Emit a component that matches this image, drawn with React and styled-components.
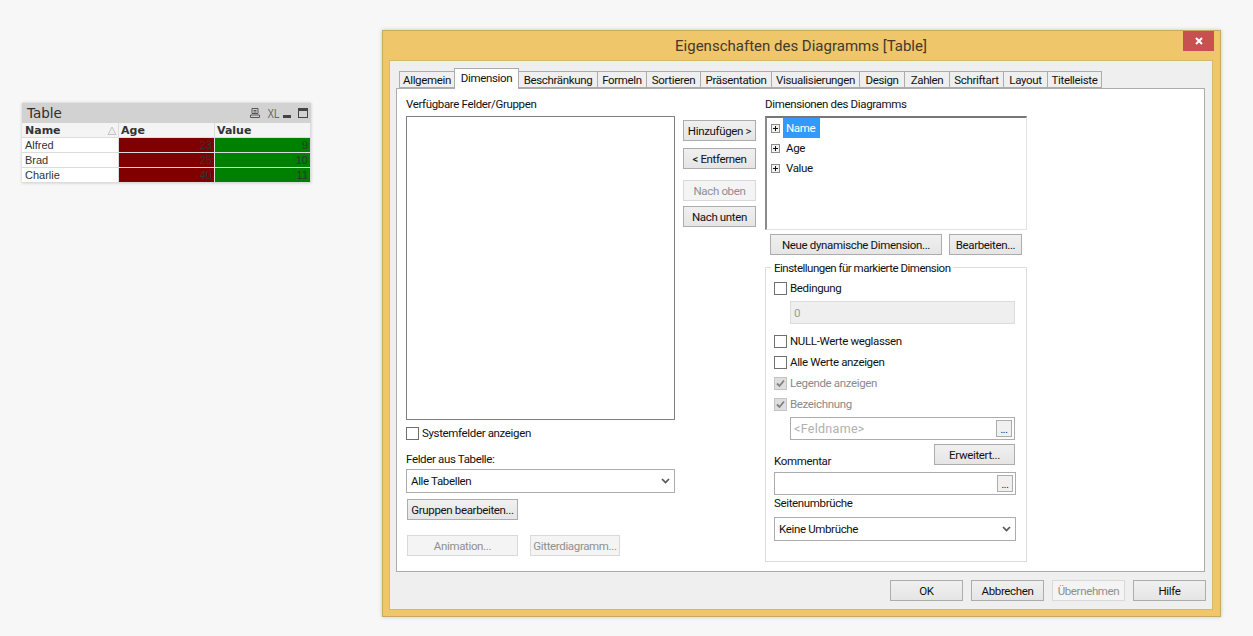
import React from "react";
import styled, { createGlobalStyle } from "styled-components";

const Global = createGlobalStyle`
  html, body { margin: 0; padding: 0; background: #f7f7f7; }
  #root { width: 1253px; height: 636px; overflow: hidden; }
`;

const Page = styled.div`
  display: flex; align-items: flex-start; gap: 71px; padding-left: 22px;
  font-family: "Roboto", sans-serif; font-size: 11.5px; color: #111; letter-spacing: -.35px;
`;

/* ---- table widget ---- */
const Widget = styled.div`
  width: 289px; margin-top: 103px; background: #fff; flex: none; letter-spacing: 0;
  box-shadow: 0 0 3px rgba(0,0,0,.2);
  font-family: "DejaVu Sans", sans-serif;
`;
const WTitle = styled.div`
  height: 20px; background: #d2d2d2; display: flex; align-items: center; padding: 0 2px 0 5px;
  color: #2e2e2e; font-size: 13.5px; justify-content: space-between;
`;
const WIcons = styled.div`
  display: flex; align-items: center; gap: 5px; color: #666; font-size: 11px;
  font-family: "Liberation Sans", sans-serif;
`;
const XL = styled.span`transform: scaleX(.75); width: 11px; display: inline-block; font-size: 13px; text-align: center;`;
const WRow = styled.div`
  display: grid; grid-template-columns: 97px 96px 96px; height: 15px; box-sizing: border-box;
  border-bottom: 1px solid #dcdcdc;
`;
const WHead = styled.div`
  background: #f4f4f4; font-weight: 700; font-size: 11px; color: #333; padding-left: 2px; line-height: 15px;
  border-right: 1px solid #dcdcdc; position: relative; box-sizing: border-box; overflow: hidden;
  &:first-child { padding-left: 3px; }
`;
const SortMark = styled.svg`position: absolute; right: 1px; top: 3px;`;
const WCell = styled.div`
  line-height: 14px; padding: 0 2px; box-sizing: border-box; overflow: hidden;
  border-right: 1px solid #dcdcdc;
  background: ${p => p.$bg || "#fff"}; color: #333;
  text-align: ${p => p.$bg ? "right" : "left"};
  font-family: "Liberation Sans", sans-serif; font-size: 11px;
  &:first-child { padding-left: 3px; }
`;

/* ---- dialog ---- */
const Dialog = styled.div`
  width: 839px; height: 587px; margin-top: 30px; box-sizing: border-box; flex: none;
  background: #efc669; border: 1px solid #c9a860; box-shadow: 0 0 4px rgba(0,0,0,.2);
  display: flex; flex-direction: column; padding: 0 7px 6px 6px;
`;
const TitleBar = styled.div`
  height: 29px; flex: none; display: flex; align-items: center; justify-content: center; position: relative;
  font-size: 15px; color: #43392a; letter-spacing: 0;
`;
const Close = styled.div`
  position: absolute; right: -1px; top: 0; width: 31px; height: 20px; background: #c75050;
  display: flex; align-items: center; justify-content: center;
`;
const Inner = styled.div`
  flex: 1; background: #efefef; border: 1px solid #d6b76c; padding: 7px 7px 0 6px; display: flex; flex-direction: column;
  box-sizing: border-box; min-height: 0;
`;
const Tabs = styled.div`display: flex; height: 20px; padding-left: 3px; align-items: flex-end; position: relative; z-index: 1;`;
const Tab = styled.div`
  width: ${p => p.$w}px; box-sizing: border-box; text-align: center; flex: none; white-space: nowrap;
  height: ${p => p.$active ? 21 : 17}px; margin-bottom: ${p => p.$active ? -1 : 0}px;
  border: 1px solid #acacac; border-bottom: ${p => p.$active ? "none" : "1px solid #acacac"};
  margin-left: -1px; background: ${p => p.$active ? "#fff" : "#efefef"}; position: relative;
  line-height: ${p => p.$active ? 18 : 16}px; z-index: ${p => p.$active ? 2 : 0};
  &:first-child { margin-left: 0; }
`;
const TabPanel = styled.div`
  height: 484px; box-sizing: border-box; background: #fff; border: 1px solid #acacac;
  display: flex; gap: 8px; padding: 9px 0 0 9px;
`;
const Col = styled.div`display: flex; flex-direction: column; width: ${p => p.$w}px; flex: none; padding-top: ${p => p.$pt || 0}px; margin-left: ${p => p.$ml || 0}px;`;
const Label = styled.div`height: 14px; line-height: 14px; margin-top: ${p => p.$mt || 0}px; margin-bottom: ${p => p.$mb || 0}px; white-space: nowrap;`;
const ColLabel = styled.div`height: 18px; line-height: 12px; white-space: nowrap;`;
const ListBox = styled.div`height: 304px; box-sizing: border-box; border: 1px solid #7e7e86; background: #fff;`;
const CheckRow = styled.div`
  display: flex; align-items: center; gap: 3px; height: 13px; margin-top: ${p => p.$mt || 0}px; white-space: nowrap;
  color: ${p => p.$disabled ? "#8a8a8a" : "#111"};
`;
const CheckText = styled.span`padding-bottom: 2px;`;
const Box = styled.span`
  width: 13px; height: 13px; box-sizing: border-box; flex: none; display: flex; align-items: center; justify-content: center;
  border: 1px solid ${p => p.$disabled ? "#c4c4c4" : "#707070"}; background: ${p => p.$disabled ? "#dedede" : "#fff"};
`;
const Select = styled.div`
  height: 24px; box-sizing: border-box; border: 1px solid #acacac; background: #fff; margin-top: ${p => p.$mt || 0}px; margin-right: ${p => p.$mr || 0}px;
  display: flex; align-items: center; justify-content: space-between; padding: 0 4px 0 4px;
`;
const Btn = styled.div`
  width: ${p => p.$w}px; height: 21px; box-sizing: border-box; flex: none; white-space: nowrap;
  display: flex; align-items: center; justify-content: center;
  margin-top: ${p => p.$mt || 0}px; margin-left: ${p => p.$ml || 0}px;
  border: 1px solid ${p => p.$disabled ? "#d9d9d9" : "#acacac"};
  color: ${p => p.$disabled ? "#8f8f8f" : "#111"};
  background: ${p => p.$disabled ? "#f4f4f4" : "linear-gradient(#f0f0f0,#e5e5e5)"};
`;
const BtnRow = styled.div`display: flex; gap: ${p => p.$gap || 0}px; margin-top: ${p => p.$mt || 0}px; padding-left: ${p => p.$pl || 0}px;`;
const Tree = styled.div`
  height: 114px; box-sizing: border-box; padding: 0 0 0 4px; background: #fff;
  border-style: solid; border-color: #777 #e3e3e3 #e3e3e3 #8a8a8a; border-width: 2px 1px 1px 2px;
`;
const TreeRow = styled.div`display: flex; align-items: center; height: 20px;`;
const Expander = styled.svg`flex: none; margin-right: 3px;`;
const TreeText = styled.span`
  padding: 0 ${p => p.$sel ? 5 : 3}px 0 3px; height: 20px; line-height: 20px;
  background: ${p => p.$sel ? "#3399ff" : "transparent"}; color: ${p => p.$sel ? "#fff" : "#111"};
`;
const Group = styled.div`
  height: 295px; box-sizing: border-box; margin-top: 12px; border: 1px solid #dcdcdc; position: relative;
  padding: 14px 11px 0 8px; display: flex; flex-direction: column;
`;
const Legend = styled.span`position: absolute; left: 5px; top: -7px; background: #fff; padding: 0 3px; line-height: 14px; white-space: nowrap; letter-spacing: -.5px;`;
const Field = styled.div`
  height: 23px; box-sizing: border-box; margin-top: ${p => p.$mt || 0}px; margin-left: ${p => p.$ml || 0}px;
  border: 1px solid ${p => p.$fill ? "#dcdcdc" : "#acacac"}; background: ${p => p.$fill ? "#efefef" : "#fff"};
  display: flex; align-items: center; justify-content: space-between; padding: 0 2px 0 3px;
  color: #9a9a9a; margin-right: ${p => p.$mr || 0}px;
`;
const Placeholder = styled.span`font-size: 12.5px; letter-spacing: .3px; color: #b0b0b0;`;
const Dots = styled.div`
  width: 16px; height: 17px; box-sizing: border-box; border: 1px solid #acacac; background: #f0f0f0; color: #111;
  display: flex; align-items: flex-end; justify-content: center; line-height: 12px; font-size: 10px;
`;
const CommentRow = styled.div`display: flex; justify-content: space-between; align-items: flex-end; margin-top: 4px; height: 21px;`;
const Footer = styled.div`display: flex; justify-content: flex-end; gap: 8px; padding-top: 8px; margin-right: -1px;`;

const tabs = [["Allgemein", 56], ["Dimension", 65], ["Beschränkung", 80], ["Formeln", 50], ["Sortieren", 55], ["Präsentation", 72], ["Visualisierungen", 89], ["Design", 46], ["Zahlen", 46], ["Schriftart", 55], ["Layout", 45], ["Titelleiste", 55]];

const Chevron = () => (
  <svg width="9" height="6" viewBox="0 0 9 6"><path d="M1 1 4.500 4.500 8 1" fill="none" stroke="#555" strokeWidth="1.7" /></svg>
);
const Check = ({ on, disabled, children, mt }) => (
  <CheckRow $mt={mt} $disabled={disabled}>
    <Box $disabled={disabled}>
      {on && <svg width="9" height="9" viewBox="0 0 9 9"><path d="M1 4.500 3.500 7 8 1.500" fill="none" stroke="#808080" strokeWidth="1.8" /></svg>}
    </Box>
    <CheckText>{children}</CheckText>
  </CheckRow>
);
const Plus = () => (
  <Expander width="9" height="9" viewBox="0 0 9 9">
    <rect x=".5" y=".5" width="8" height="8" fill="#f2f2f2" stroke="#8b8b8b" />
    <path d="M2 4.500h5M4.500 2v5" stroke="#111" />
  </Expander>
);

const rows = [["Alfred", 23, 9], ["Brad", 25, 10], ["Charlie", 40, 11]];

export default function App() {
  return (
    <Page>
      <Global />
      <Widget>
        <WTitle>
          Table
          <WIcons>
            <svg width="12" height="12" viewBox="0 0 12 12"><path d="M3 1.500h6v5H3zM1.500 8h9v2.500h-9zM4.500 3.500h3M4.500 5h3" fill="none" stroke="#555" /></svg>
            <XL>XL</XL>
            <svg width="10" height="12" viewBox="0 0 10 12"><rect x="1" y="8" width="8" height="3" fill="#444" /></svg>
            <svg width="12" height="12" viewBox="0 0 12 12"><rect x="1.500" y="1.500" width="9" height="9" fill="none" stroke="#444" /><rect x="1" y="1" width="10" height="3" fill="#444" /></svg>
          </WIcons>
        </WTitle>
        <WRow>
          <WHead>Name<SortMark width="10" height="10" viewBox="0 0 10 10"><path d="M5 1 9 8.500H1z" fill="#efefef" stroke="#c4c4c4" /></SortMark></WHead>
          <WHead>Age</WHead>
          <WHead>Value</WHead>
        </WRow>
        {rows.map(([n, a, v]) => (
          <WRow key={n}>
            <WCell>{n}</WCell>
            <WCell $bg="#800000">{a}</WCell>
            <WCell $bg="#008000">{v}</WCell>
          </WRow>
        ))}
      </Widget>

      <Dialog>
        <TitleBar>
          Eigenschaften des Diagramms [Table]
          <Close><svg width="10" height="10" viewBox="0 0 10 10"><path d="M2 2 8 8M8 2 2 8" stroke="#fff" strokeWidth="2" /></svg></Close>
        </TitleBar>
        <Inner>
          <Tabs>
            {tabs.map(([t, w]) => <Tab key={t} $w={w} $active={t === "Dimension"}>{t}</Tab>)}
          </Tabs>
          <TabPanel>
            <Col $w={269}>
              <ColLabel>Verfügbare Felder/Gruppen</ColLabel>
              <ListBox />
              <CheckRow $mt={7}><Box /><CheckText>Systemfelder anzeigen</CheckText></CheckRow>
              <Label $mt={12}>Felder aus Tabelle:</Label>
              <Select $mt={3}>Alle Tabellen<Chevron /></Select>
              <Btn $w={111} $mt={6} $ml={1}>Gruppen bearbeiten...</Btn>
              <BtnRow $mt={15} $pl={1} $gap={12}>
                <Btn $w={111} $disabled>Animation...</Btn>
                <Btn $w={90} $disabled>Gitterdiagramm...</Btn>
              </BtnRow>
            </Col>
            <Col $w={73} $pt={22}>
              <Btn $w={73}>Hinzufügen &gt;</Btn>
              <Btn $w={73} $mt={7}>&lt; Entfernen</Btn>
              <Btn $w={73} $mt={11} $disabled>Nach oben</Btn>
              <Btn $w={73} $mt={5}>Nach unten</Btn>
            </Col>
            <Col $w={262} $ml={1}>
              <ColLabel>Dimensionen des Diagramms</ColLabel>
              <Tree>
                <TreeRow><Plus /><TreeText $sel>Name</TreeText></TreeRow>
                <TreeRow><Plus /><TreeText>Age</TreeText></TreeRow>
                <TreeRow><Plus /><TreeText>Value</TreeText></TreeRow>
              </Tree>
              <BtnRow $mt={4} $pl={5} $gap={7}>
                <Btn $w={172}>Neue dynamische Dimension...</Btn>
                <Btn $w={73}>Bearbeiten...</Btn>
              </BtnRow>
              <Group>
                <Legend>Einstellungen für markierte Dimension</Legend>
                <Check>Bedingung</Check>
                <Field $fill $mt={6} $ml={16}>0</Field>
                <Check mt={11}>NULL-Werte weglassen</Check>
                <Check mt={8}>Alle Werte anzeigen</Check>
                <Check mt={8} on disabled>Legende anzeigen</Check>
                <Check mt={8} on disabled>Bezeichnung</Check>
                <Field $mt={6} $ml={16}><Placeholder>&lt;Feldname&gt;</Placeholder><Dots>...</Dots></Field>
                <CommentRow>
                  <Label $mb={-3}>Kommentar</Label>
                  <Btn $w={81}>Erweitert...</Btn>
                </CommentRow>
                <Field $mt={7} $mr={-1}><span /><Dots>...</Dots></Field>
                <Label $mt={1}>Seitenumbrüche</Label>
                <Select $mt={7} $mr={-1}>Keine Umbrüche<Chevron /></Select>
              </Group>
            </Col>
          </TabPanel>
          <Footer>
            <Btn $w={73}>OK</Btn>
            <Btn $w={73}>Abbrechen</Btn>
            <Btn $w={73} $disabled>Übernehmen</Btn>
            <Btn $w={73}>Hilfe</Btn>
          </Footer>
        </Inner>
      </Dialog>
    </Page>
  );
}
